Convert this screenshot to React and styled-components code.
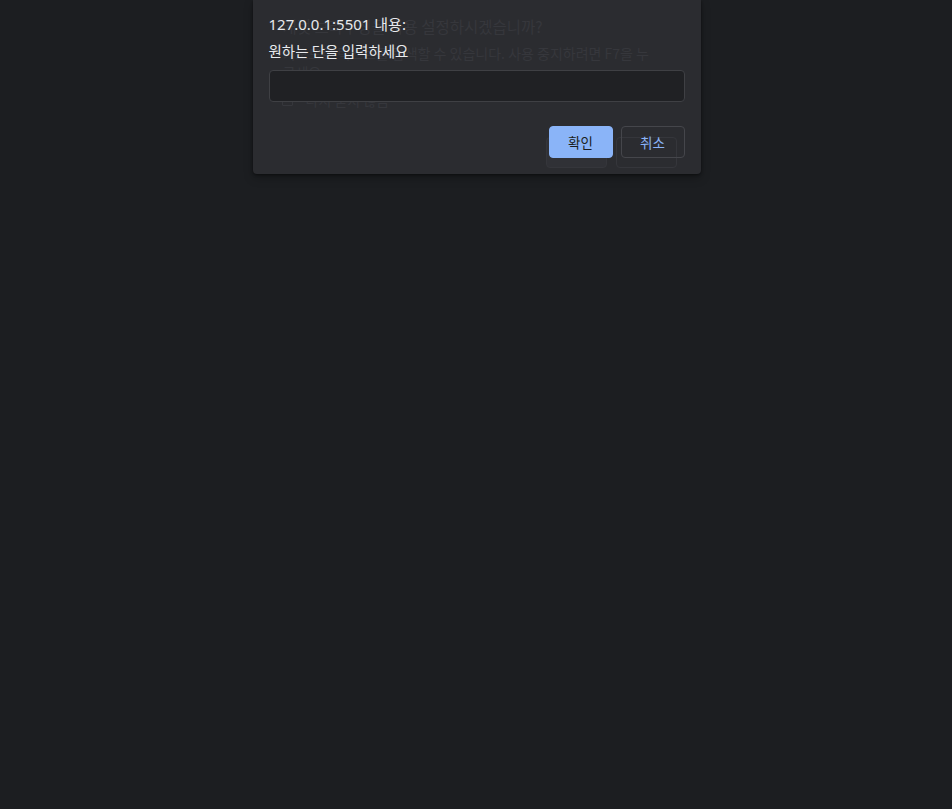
import React from "react";
import styled, { createGlobalStyle } from "styled-components";

const GlobalStyle = createGlobalStyle`
  html, body {
    margin: 0;
    padding: 0;
    background: #1c1e21;
    height: 100%;
  }
  body {
    font-family: "Noto Sans", "Noto Sans CJK KR", sans-serif;
  }
`;

const Page = styled.div`
  min-height: 809px;
  display: flex;
  justify-content: center;
  padding-left: 1px;
`;

const Dialog = styled.div`
  position: relative;
  width: 448px;
  height: 174px;
  box-sizing: border-box;
  padding: 13px 16px 16px;
  background: #2b2c30;
  border-radius: 0 0 4px 4px;
  box-shadow: 0 1px 3px rgba(0, 0, 0, 0.45), 0 4px 10px rgba(0, 0, 0, 0.25);
  display: flex;
  flex-direction: column;
  overflow: hidden;
`;

/* faded dialog that shows through behind the prompt */
const Ghost = styled.div`
  position: absolute;
  inset: 0;
  padding: 14px 48px 0 30px;
  color: #36373c;
  font-family: "Noto Sans CJK KR", "Noto Sans", sans-serif;
  pointer-events: none;
`;

const GhostTitle = styled.div`
  font-size: 15.5px;
  line-height: 24px;
`;

const GhostText = styled.div`
  margin-top: 6px;
  font-size: 14px;
  line-height: 19px;
  word-break: break-all;
`;

const GhostCheck = styled.div`
  margin-top: 9px;
  margin-left: -1px;
  display: flex;
  align-items: center;
  gap: 13px;
  font-size: 14px;
  line-height: 19px;
  span:first-child {
    width: 9px;
    height: 9px;
    border: 1px solid #36373c;
    border-radius: 1px;
  }
`;

const GhostButtons = styled.div`
  position: absolute;
  top: 137px;
  left: 293px;
  display: flex;
  gap: 9px;
`;

const GhostButton = styled.div`
  width: 61px;
  height: 31px;
  box-sizing: border-box;
  border: 1px solid #35363b;
  border-radius: 4px;
  background: ${p => (p.primary ? "#303136" : "transparent")};
`;

const Content = styled.div`
  position: relative;
  display: flex;
  flex-direction: column;
  flex: 1;
`;

const Title = styled.div`
  font-family: "Noto Sans", "Noto Sans CJK KR", sans-serif;
  font-size: 15px;
  line-height: 22px;
  color: #e8eaed;
`;

const Message = styled.div`
  margin-top: 6px;
  font-family: "Noto Sans CJK KR", "Noto Sans", sans-serif;
  font-size: 14.5px;
  line-height: 20px;
  color: #e8eaed;
`;

const Input = styled.input`
  margin-top: 9px;
  height: 32px;
  box-sizing: border-box;
  width: 100%;
  background: #202124;
  border: 1px solid #3f4044;
  border-radius: 4px;
  outline: none;
  color: #e8eaed;
  padding: 0 8px;
`;

const Buttons = styled.div`
  margin-top: auto;
  display: flex;
  justify-content: flex-end;
  gap: 8px;
`;

const Button = styled.button`
  width: 64px;
  height: 32px;
  box-sizing: border-box;
  border-radius: 4px;
  font-family: "Noto Sans CJK KR", "Noto Sans", sans-serif;
  font-size: 13.5px;
  cursor: pointer;
  border: 1px solid ${p => (p.primary ? "#8ab4f8" : "#45464b")};
  background: ${p => (p.primary ? "#8ab4f8" : "transparent")};
  color: ${p => (p.primary ? "#1c1e21" : "#8ab4f8")};
`;

export default function App() {
  return (
    <>
      <GlobalStyle />
      <Page>
        <Dialog>
          <Ghost>
            <GhostTitle>캐럿 브라우징을 사용 설정하시겠습니까?</GhostTitle>
            <GhostText>
              키보드로 텍스트를 탐색할 수 있습니다. 사용 중지하려면 F7을 누르세요.
            </GhostText>
            <GhostCheck>
              <span />
              <span>다시 묻지 않음</span>
            </GhostCheck>
            <GhostButtons>
              <GhostButton primary />
              <GhostButton />
            </GhostButtons>
          </Ghost>
          <Content>
            <Title>127.0.0.1:5501 내용:</Title>
            <Message>원하는 단을 입력하세요</Message>
            <Input />
            <Buttons>
              <Button primary>확인</Button>
              <Button>취소</Button>
            </Buttons>
          </Content>
        </Dialog>
      </Page>
    </>
  );
}
